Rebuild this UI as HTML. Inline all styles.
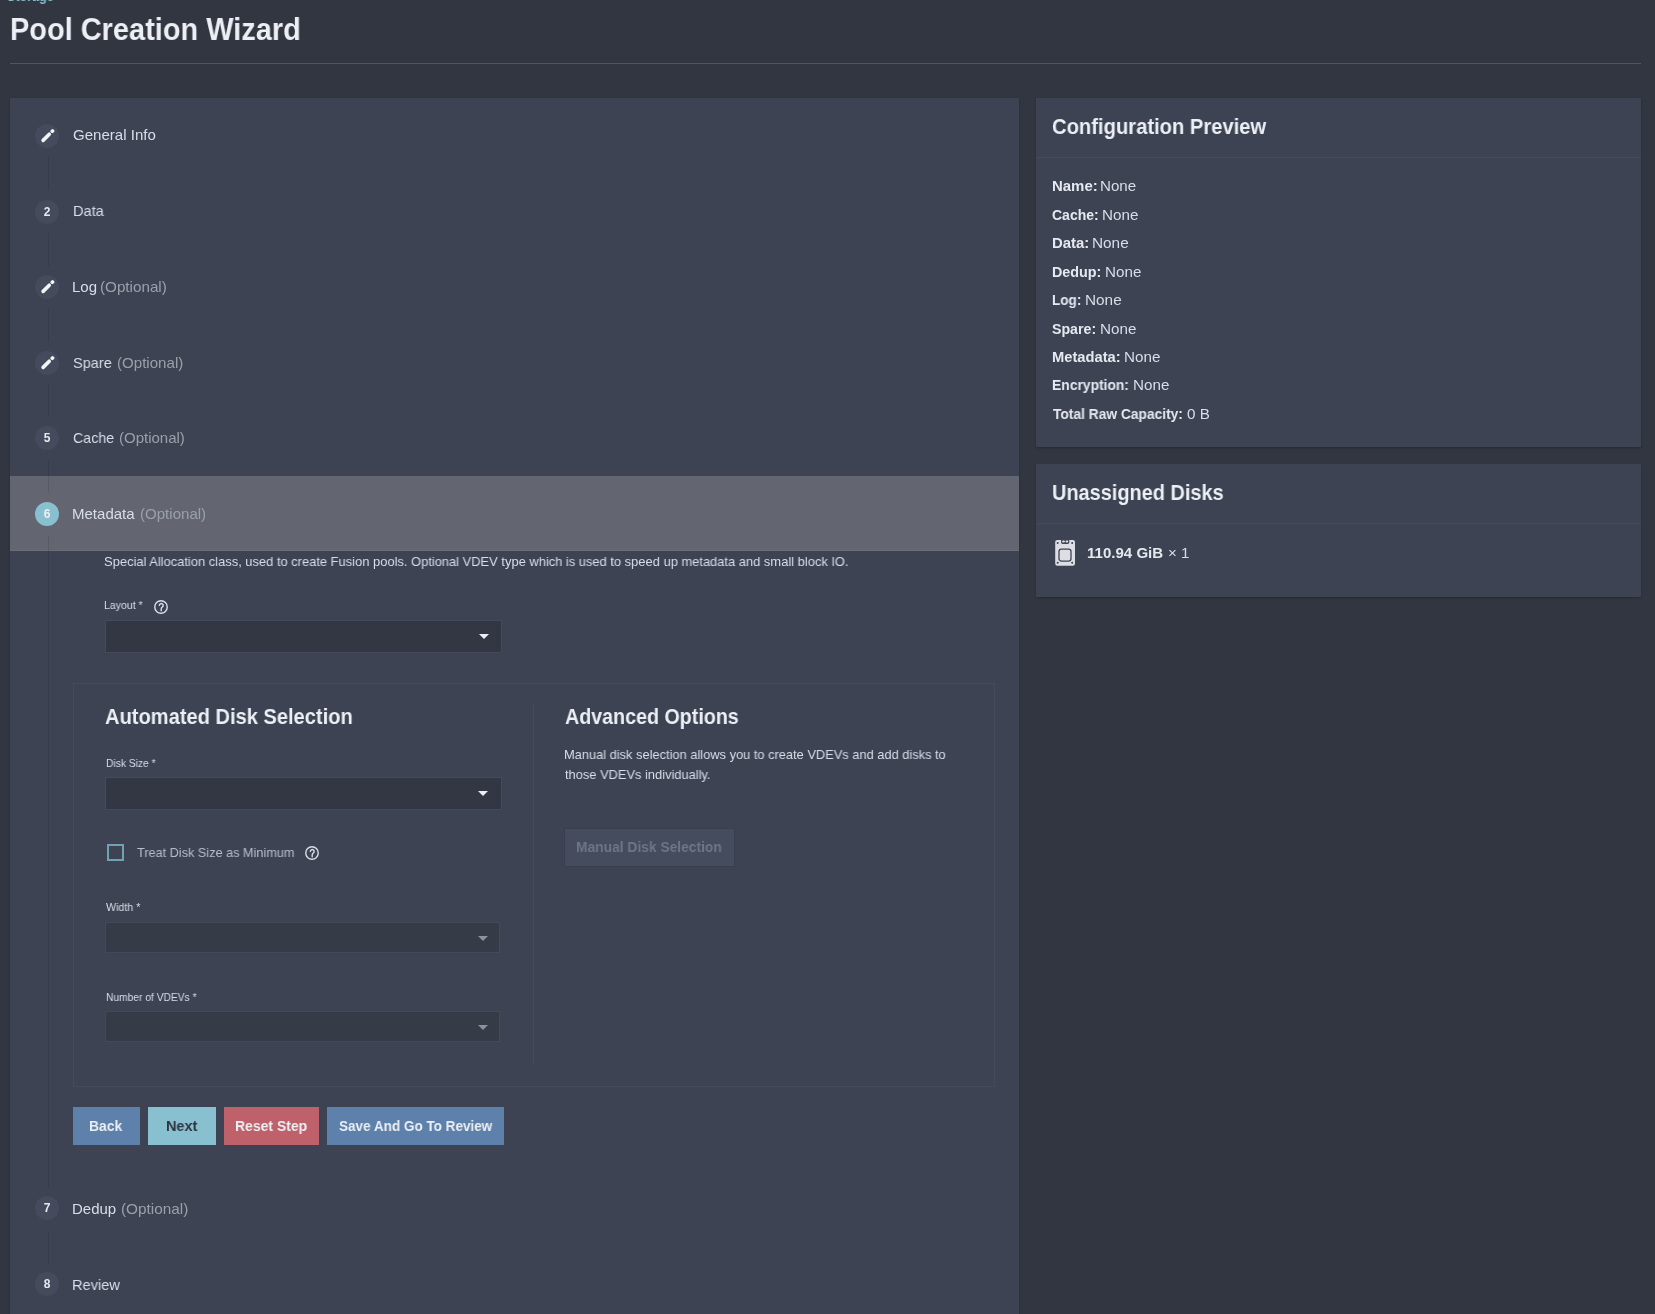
<!DOCTYPE html>
<html><head><meta charset="utf-8"><title>Pool Creation Wizard</title>
<style>
html,body{margin:0;padding:0;}
body{width:1655px;height:1314px;overflow:hidden;position:relative;background:#323641;font-family:"Liberation Sans",sans-serif;}
.a{position:absolute;}
.t{position:absolute;white-space:nowrap;transform-origin:0 0;will-change:transform;font-family:"Liberation Sans",sans-serif;}
.card{position:absolute;background:#3d4353;box-shadow:0 1px 2px rgba(0,0,0,.25);}
.circ{position:absolute;width:24px;height:24px;border-radius:50%;background:#454b5c;color:#e5e9f0;font-size:12px;font-weight:700;will-change:transform;line-height:24px;text-align:center;font-family:"Liberation Sans",sans-serif;}
.vline{position:absolute;width:1px;background:rgba(0,0,0,.1);left:48px;}
.sel{position:absolute;left:105px;width:395px;height:31px;background:#323743;border:1px solid #434a5a;}
.sel.dis{background:#363b48;border-color:#424959;width:393px;height:29px;}
.arrow{position:absolute;width:0;height:0;border-left:5px solid transparent;border-right:5px solid transparent;border-top:5px solid #eceff4;}
.btn{position:absolute;top:1107px;height:38px;}

</style></head><body>
<div class="a" style="left:10px;top:63px;width:1631px;height:1px;background:#4c566a"></div>
<div class="card" style="left:10px;top:98px;width:1009px;height:1230px"></div>
<div class="card" style="left:1036px;top:98px;width:605px;height:349px"></div>
<div class="a" style="left:1036px;top:157px;width:605px;height:1px;background:#434a5a"></div>
<div class="card" style="left:1036px;top:464px;width:605px;height:133px"></div>
<div class="a" style="left:1036px;top:523px;width:605px;height:1px;background:#434a5a"></div>

<!-- highlighted row -->
<div class="a" style="left:10px;top:476px;width:1009px;height:75px;background:#636670"></div>
<div class="a" style="left:10px;top:550px;width:1009px;height:1px;background:#6b6e74"></div>

<!-- connectors -->
<div class="vline" style="top:157px;height:33px"></div>
<div class="vline" style="top:233px;height:33px"></div>
<div class="vline" style="top:309px;height:33px"></div>
<div class="vline" style="top:384px;height:33px"></div>
<div class="vline" style="top:460px;height:33px"></div>
<div class="vline" style="top:536px;height:652px"></div>
<div class="vline" style="top:1231px;height:33px"></div>

<!-- circles -->
<div class="circ" style="left:35px;top:123.5px"><svg width="24" height="24" viewBox="0 0 24 24" style="position:absolute;left:0;top:0"><g transform="translate(12.7 11.8) rotate(-45)"><rect x="-8.3" y="-1.8" width="12.3" height="3.6" rx="1.8" fill="#f2f4f8"/><rect x="4.7" y="-1.8" width="3.9" height="3.6" rx="1.4" fill="#f2f4f8"/></g></svg></div>
<div class="circ" style="left:35px;top:199.5px">2</div>
<div class="circ" style="left:35px;top:275px"><svg width="24" height="24" viewBox="0 0 24 24" style="position:absolute;left:0;top:0"><g transform="translate(12.7 11.8) rotate(-45)"><rect x="-8.3" y="-1.8" width="12.3" height="3.6" rx="1.8" fill="#f2f4f8"/><rect x="4.7" y="-1.8" width="3.9" height="3.6" rx="1.4" fill="#f2f4f8"/></g></svg></div>
<div class="circ" style="left:35px;top:350.5px"><svg width="24" height="24" viewBox="0 0 24 24" style="position:absolute;left:0;top:0"><g transform="translate(12.7 11.8) rotate(-45)"><rect x="-8.3" y="-1.8" width="12.3" height="3.6" rx="1.8" fill="#f2f4f8"/><rect x="4.7" y="-1.8" width="3.9" height="3.6" rx="1.4" fill="#f2f4f8"/></g></svg></div>
<div class="circ" style="left:35px;top:426px">5</div>
<div class="circ" style="left:35px;top:501.5px;background:#88c0d0;color:#eceff4">6</div>
<div class="circ" style="left:35px;top:1196px">7</div>
<div class="circ" style="left:35px;top:1272px">8</div>

<!-- layout help + select -->
<svg class="a" style="left:154.1px;top:599.6px" width="14" height="14" viewBox="0 0 14 14"><circle cx="7" cy="7" r="6.25" fill="none" stroke="#d8dee9" stroke-width="1.4"/><path d="M5.3 5.4a1.95 1.95 0 1 1 2.9 1.8c-0.7 0.4-1.0 0.9-1.0 1.6v1.9" fill="none" stroke="#d8dee9" stroke-width="1.4" stroke-linecap="round"/></svg>
<div class="sel" style="top:620px"></div>
<div class="arrow" style="left:479px;top:634px"></div>

<!-- fieldset -->
<div class="a" style="left:73px;top:683px;width:920px;height:402px;border:1px solid #444b5b"></div>
<div class="a" style="left:533px;top:704px;width:1px;height:360px;background:#444b5b"></div>

<div class="sel" style="top:777px"></div>
<div class="arrow" style="left:478px;top:791px"></div>
<div class="a" style="left:107px;top:844px;width:13px;height:13px;border:2px solid #6fa3b3"></div>
<svg class="a" style="left:305.1px;top:845.7px" width="14" height="14" viewBox="0 0 14 14"><circle cx="7" cy="7" r="6.25" fill="none" stroke="#d8dee9" stroke-width="1.4"/><path d="M5.3 5.4a1.95 1.95 0 1 1 2.9 1.8c-0.7 0.4-1.0 0.9-1.0 1.6v1.9" fill="none" stroke="#d8dee9" stroke-width="1.4" stroke-linecap="round"/></svg>
<div class="sel dis" style="top:922px"></div>
<div class="arrow" style="left:478px;top:936px;border-top-color:#8b919d"></div>
<div class="sel dis" style="top:1011px"></div>
<div class="arrow" style="left:478px;top:1025px;border-top-color:#8b919d"></div>

<div class="a" style="left:565px;top:829px;width:169px;height:37px;background:#444c5e;box-shadow:0 0 0 1px rgba(0,0,0,.06)"></div>

<!-- buttons -->
<div class="btn" style="left:73px;width:67px;background:#5e81ac"></div>
<div class="btn" style="left:148px;width:68px;background:#88c0d0"></div>
<div class="btn" style="left:224px;width:95px;background:#bf616a"></div>
<div class="btn" style="left:327px;width:177px;background:#5e81ac"></div>

<!-- disk icon -->
<svg class="a" style="left:1055.2px;top:539.8px" width="21" height="26" viewBox="0 0 21 26">
<rect x="0.2" y="0.1" width="19.8" height="25.7" rx="2.2" fill="#dcdee3"/>
<rect x="6.1" y="-1" width="8.2" height="4.9" rx="1.6" fill="#3d4353"/>
<rect x="7.2" y="0.5" width="2.6" height="1.9" rx="0.6" fill="#dcdee3"/>
<rect x="10.6" y="0.5" width="2.6" height="1.9" rx="0.6" fill="#dcdee3"/>
<circle cx="2.7" cy="3" r="1" fill="#3d4353"/><circle cx="17.2" cy="3" r="1" fill="#3d4353"/>
<circle cx="2.7" cy="22.7" r="1" fill="#3d4353"/><circle cx="17.2" cy="22.7" r="1" fill="#3d4353"/>
<rect x="4" y="9.1" width="12" height="12" rx="2.4" fill="none" stroke="#3d4353" stroke-width="1.3"/>
</svg>

<span class='t' id='t0' style='left:7.22px;top:-9.90px;font-size:13px;line-height:13px;font-weight:700;color:#88c0d0;transform:scaleX(0.9626);'>Storage</span>
<span class='t' id='t1' style='left:10.33px;top:12.91px;font-size:32px;line-height:32px;font-weight:700;color:#eceff4;transform:scaleX(0.9045);'>Pool Creation Wizard</span>
<span class='t' id='t2' style='left:72.85px;top:127.30px;font-size:15px;line-height:15px;font-weight:400;color:#d8dee9;transform:scaleX(1.0044);'>General Info</span>
<span class='t' id='t3' style='left:72.60px;top:203.10px;font-size:15px;line-height:15px;font-weight:400;color:#d8dee9;transform:scaleX(0.9732);'>Data</span>
<span class='t' id='t4' style='left:71.80px;top:278.90px;font-size:15px;line-height:15px;font-weight:400;color:#d8dee9;transform:scaleX(0.9987);'>Log</span>
<span class='t' id='t5' style='left:100.10px;top:278.90px;font-size:15px;line-height:15px;font-weight:400;color:#9aa0aa;transform:scaleX(1.0144);'>(Optional)</span>
<span class='t' id='t6' style='left:72.85px;top:354.50px;font-size:15px;line-height:15px;font-weight:400;color:#d8dee9;transform:scaleX(0.9680);'>Spare</span>
<span class='t' id='t7' style='left:116.50px;top:354.50px;font-size:15px;line-height:15px;font-weight:400;color:#9aa0aa;transform:scaleX(1.0060);'>(Optional)</span>
<span class='t' id='t8' style='left:72.85px;top:430.30px;font-size:15px;line-height:15px;font-weight:400;color:#d8dee9;transform:scaleX(0.9479);'>Cache</span>
<span class='t' id='t9' style='left:119.10px;top:430.30px;font-size:15px;line-height:15px;font-weight:400;color:#9aa0aa;transform:scaleX(0.9992);'>(Optional)</span>
<span class='t' id='t10' style='left:72.15px;top:505.90px;font-size:15px;line-height:15px;font-weight:400;color:#d8dee9;transform:scaleX(1.0012);'>Metadata</span>
<span class='t' id='t11' style='left:140.30px;top:505.90px;font-size:15px;line-height:15px;font-weight:400;color:#9aa0aa;transform:scaleX(1.0038);'>(Optional)</span>
<span class='t' id='t12' style='left:71.95px;top:1200.90px;font-size:15px;line-height:15px;font-weight:400;color:#d8dee9;transform:scaleX(0.9995);'>Dedup</span>
<span class='t' id='t13' style='left:120.90px;top:1200.90px;font-size:15px;line-height:15px;font-weight:400;color:#9aa0aa;transform:scaleX(1.0212);'>(Optional)</span>
<span class='t' id='t14' style='left:71.95px;top:1276.70px;font-size:15px;line-height:15px;font-weight:400;color:#d8dee9;transform:scaleX(0.9746);'>Review</span>
<span class='t' id='t15' style='left:103.97px;top:555.00px;font-size:13px;line-height:13px;font-weight:400;color:#d8dee9;transform:scaleX(0.9926);'>Special Allocation class, used to create Fusion pools. Optional VDEV type which is used to speed up metadata and small block IO.</span>
<span class='t' id='t16' style='left:104.49px;top:599.99px;font-size:11px;line-height:11px;font-weight:400;color:#d8dee9;transform:scaleX(0.9592);'>Layout *</span>
<span class='t' id='t17' style='left:105.18px;top:705.98px;font-size:22px;line-height:22px;font-weight:700;color:#eceff4;transform:scaleX(0.9129);'>Automated Disk Selection</span>
<span class='t' id='t18' style='left:564.98px;top:705.98px;font-size:22px;line-height:22px;font-weight:700;color:#eceff4;transform:scaleX(0.8940);'>Advanced Options</span>
<span class='t' id='t19' style='left:564.02px;top:747.50px;font-size:13px;line-height:13px;font-weight:400;color:#d8dee9;transform:scaleX(0.9874);'>Manual disk selection allows you to create VDEVs and add disks to</span>
<span class='t' id='t20' style='left:565.27px;top:768.30px;font-size:13px;line-height:13px;font-weight:400;color:#d8dee9;transform:scaleX(0.9887);'>those VDEVs individually.</span>
<span class='t' id='t21' style='left:576.30px;top:839.20px;font-size:15px;line-height:15px;font-weight:700;color:#6f7685;transform:scaleX(0.9203);'>Manual Disk Selection</span>
<span class='t' id='t22' style='left:106.09px;top:758.49px;font-size:11px;line-height:11px;font-weight:400;color:#d8dee9;transform:scaleX(0.9311);'>Disk Size *</span>
<span class='t' id='t23' style='left:137.47px;top:846.30px;font-size:13px;line-height:13px;font-weight:400;color:#b8bec9;transform:scaleX(0.9760);'>Treat Disk Size as Minimum</span>
<span class='t' id='t24' style='left:105.94px;top:902.09px;font-size:11px;line-height:11px;font-weight:400;color:#d8dee9;transform:scaleX(0.9671);'>Width *</span>
<span class='t' id='t25' style='left:105.69px;top:991.59px;font-size:11px;line-height:11px;font-weight:400;color:#d8dee9;transform:scaleX(0.9312);'>Number of VDEVs *</span>
<span class='t' id='t26' style='left:88.95px;top:1118.40px;font-size:15px;line-height:15px;font-weight:700;color:#eceff4;transform:scaleX(0.9265);'>Back</span>
<span class='t' id='t27' style='left:166.10px;top:1118.40px;font-size:15px;line-height:15px;font-weight:700;color:#2e3440;transform:scaleX(0.9628);'>Next</span>
<span class='t' id='t28' style='left:234.90px;top:1118.40px;font-size:15px;line-height:15px;font-weight:700;color:#eceff4;transform:scaleX(0.9316);'>Reset Step</span>
<span class='t' id='t29' style='left:338.80px;top:1118.40px;font-size:15px;line-height:15px;font-weight:700;color:#eceff4;transform:scaleX(0.9015);'>Save And Go To Review</span>
<span class='t' id='t30' style='left:1052.43px;top:116.18px;font-size:22px;line-height:22px;font-weight:700;color:#eceff4;transform:scaleX(0.9176);'>Configuration Preview</span>
<span class='t' id='t31' style='left:1051.56px;top:179.45px;font-size:14px;line-height:14px;font-weight:700;color:#e5e9f0;transform:scaleX(1.0685);'>Name:</span>
<span class='t' id='t32' style='left:1100.21px;top:179.45px;font-size:14px;line-height:14px;font-weight:400;color:#d8dee9;transform:scaleX(1.0805);'>None</span>
<span class='t' id='t33' style='left:1052.06px;top:208.15px;font-size:14px;line-height:14px;font-weight:700;color:#e5e9f0;transform:scaleX(0.9995);'>Cache:</span>
<span class='t' id='t34' style='left:1101.61px;top:208.15px;font-size:14px;line-height:14px;font-weight:400;color:#d8dee9;transform:scaleX(1.0859);'>None</span>
<span class='t' id='t35' style='left:1051.56px;top:236.15px;font-size:14px;line-height:14px;font-weight:700;color:#e5e9f0;transform:scaleX(1.0642);'>Data:</span>
<span class='t' id='t36' style='left:1092.01px;top:236.15px;font-size:14px;line-height:14px;font-weight:400;color:#d8dee9;transform:scaleX(1.0965);'>None</span>
<span class='t' id='t37' style='left:1051.56px;top:265.05px;font-size:14px;line-height:14px;font-weight:700;color:#e5e9f0;transform:scaleX(1.0246);'>Dedup:</span>
<span class='t' id='t38' style='left:1104.81px;top:265.05px;font-size:14px;line-height:14px;font-weight:400;color:#d8dee9;transform:scaleX(1.0859);'>None</span>
<span class='t' id='t39' style='left:1052.31px;top:292.65px;font-size:14px;line-height:14px;font-weight:700;color:#e5e9f0;transform:scaleX(0.9672);'>Log:</span>
<span class='t' id='t40' style='left:1084.81px;top:292.65px;font-size:14px;line-height:14px;font-weight:400;color:#d8dee9;transform:scaleX(1.0965);'>None</span>
<span class='t' id='t41' style='left:1052.06px;top:322.15px;font-size:14px;line-height:14px;font-weight:700;color:#e5e9f0;transform:scaleX(1.0126);'>Spare:</span>
<span class='t' id='t42' style='left:1099.81px;top:322.15px;font-size:14px;line-height:14px;font-weight:400;color:#d8dee9;transform:scaleX(1.0859);'>None</span>
<span class='t' id='t43' style='left:1051.56px;top:350.15px;font-size:14px;line-height:14px;font-weight:700;color:#e5e9f0;transform:scaleX(1.0509);'>Metadata:</span>
<span class='t' id='t44' style='left:1123.61px;top:350.15px;font-size:14px;line-height:14px;font-weight:400;color:#d8dee9;transform:scaleX(1.0859);'>None</span>
<span class='t' id='t45' style='left:1051.81px;top:378.15px;font-size:14px;line-height:14px;font-weight:700;color:#e5e9f0;transform:scaleX(0.9901);'>Encryption:</span>
<span class='t' id='t46' style='left:1132.81px;top:378.15px;font-size:14px;line-height:14px;font-weight:400;color:#d8dee9;transform:scaleX(1.0859);'>None</span>
<span class='t' id='t47' style='left:1052.56px;top:406.95px;font-size:14px;line-height:14px;font-weight:700;color:#e5e9f0;transform:scaleX(0.9842);'>Total Raw Capacity:</span>
<span class='t' id='t48' style='left:1186.86px;top:406.95px;font-size:14px;line-height:14px;font-weight:400;color:#d8dee9;transform:scaleX(1.0862);'>0 B</span>
<span class='t' id='t49' style='left:1051.93px;top:481.88px;font-size:22px;line-height:22px;font-weight:700;color:#eceff4;transform:scaleX(0.9059);'>Unassigned Disks</span>
<span class='t' id='t50' style='left:1087.33px;top:546.23px;font-size:14.5px;line-height:14.5px;font-weight:700;color:#e5e9f0;transform:scaleX(1.0379);'>110.94 GiB</span>
<span class='t' id='t51' style='left:1167.73px;top:546.23px;font-size:14.5px;line-height:14.5px;font-weight:400;color:#d8dee9;transform:scaleX(1.0448);'>× 1</span>
</body></html>
